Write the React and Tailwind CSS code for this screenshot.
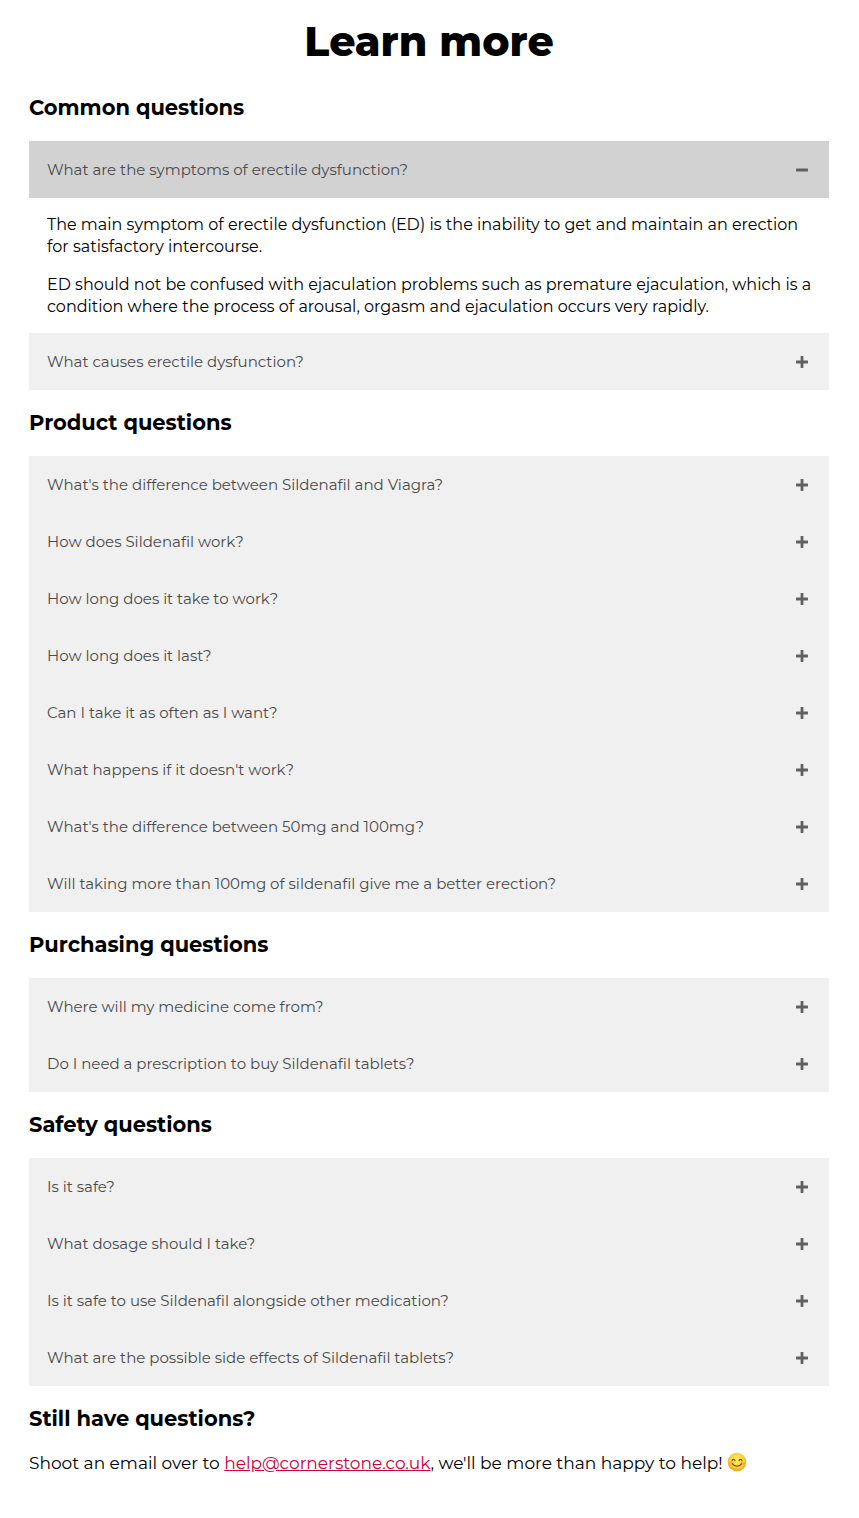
import { useState } from "react";

const sections = [
  {
    title: "Common questions",
    items: [
      {
        q: "What are the symptoms of erectile dysfunction?",
        a: [
          "The main symptom of erectile dysfunction (ED) is the inability to get and maintain an erection for satisfactory intercourse.",
          "ED should not be confused with ejaculation problems such as premature ejaculation, which is a condition where the process of arousal, orgasm and ejaculation occurs very rapidly.",
        ],
      },
      { q: "What causes erectile dysfunction?" },
    ],
  },
  {
    title: "Product questions",
    items: [
      { q: "What's the difference between Sildenafil and Viagra?" },
      { q: "How does Sildenafil work?" },
      { q: "How long does it take to work?" },
      { q: "How long does it last?" },
      { q: "Can I take it as often as I want?" },
      { q: "What happens if it doesn't work?" },
      { q: "What's the difference between 50mg and 100mg?" },
      { q: "Will taking more than 100mg of sildenafil give me a better erection?" },
    ],
  },
  {
    title: "Purchasing questions",
    items: [
      { q: "Where will my medicine come from?" },
      { q: "Do I need a prescription to buy Sildenafil tablets?" },
    ],
  },
  {
    title: "Safety questions",
    items: [
      { q: "Is it safe?" },
      { q: "What dosage should I take?" },
      { q: "Is it safe to use Sildenafil alongside other medication?" },
      { q: "What are the possible side effects of Sildenafil tablets?" },
    ],
  },
];

function ToggleIcon({ open }) {
  return (
    <svg viewBox="0 0 12 12" className="size-3 shrink-0" fill="#606060" aria-hidden="true">
      <rect x="0" y="4.6" width="12" height="2.8" rx="0.4" />
      {!open && <rect x="4.6" y="0" width="2.8" height="12" rx="0.4" />}
    </svg>
  );
}

function Smile() {
  return (
    <svg viewBox="0 0 20 20" className="ml-1 inline-block size-5 align-[-3px]" role="img" aria-label="Smiling face">
      <defs>
        <radialGradient id="face" cx="50%" cy="42%" r="58%">
          <stop offset="0" stopColor="#ffec66" />
          <stop offset="0.6" stopColor="#fed53c" />
          <stop offset="1" stopColor="#f39d1c" />
        </radialGradient>
      </defs>
      <circle cx="10" cy="10" r="9.3" fill="url(#face)" />
      <ellipse cx="4.4" cy="11.2" rx="2.3" ry="1.8" fill="#fb8c2c" opacity="0.45" />
      <ellipse cx="15.6" cy="11.2" rx="2.3" ry="1.8" fill="#fb8c2c" opacity="0.45" />
      <g fill="none" stroke="#6e3d10" strokeWidth="1.1" strokeLinecap="round">
        <path d="M5 8.6C5.5 6.7 7.5 6.7 8 8.6" />
        <path d="M12 8.6C12.5 6.7 14.5 6.7 15 8.6" />
        <path d="M5.4 11.8C7.4 15 12.6 15 14.6 11.8" />
      </g>
    </svg>
  );
}

function Question({ id, item, initiallyOpen }) {
  const [open, setOpen] = useState(initiallyOpen);
  return (
    <div>
      <h3>
        <button
          type="button"
          aria-expanded={open}
          aria-controls={id}
          onClick={() => setOpen(!open)}
          className={
            "flex min-h-[57px] w-full items-center justify-between gap-4 pr-[21px] pl-[18px] text-left text-[15px] leading-[23px] text-[#4a4a4a] " +
            (open ? "bg-[#d2d2d2]" : "bg-[#f0f0f0]")
          }
        >
          <span>{item.q}</span>
          <ToggleIcon open={open} />
        </button>
      </h3>
      <div id={id} hidden={!open}>
        {item.a && (
          <div className="space-y-4 pt-4 pr-4 pb-[15px] pl-[18px] text-base leading-[22px]">
            {item.a.map((text) => (
              <p key={text}>{text}</p>
            ))}
          </div>
        )}
      </div>
    </div>
  );
}

function SectionTitle({ children }) {
  return <h2 className="py-[18px] text-[21px] leading-[30px] font-bold">{children}</h2>;
}

export default function App() {
  return (
    <main className="min-h-screen bg-white pt-2 pr-[30px] pb-11 pl-[29px] font-['Montserrat','Inter',sans-serif] text-black">
      <h1 className="text-center text-[41px] leading-[67px] font-extrabold">Learn more</h1>
      {sections.map((section, s) => (
        <section key={section.title}>
          <SectionTitle>{section.title}</SectionTitle>
          {section.items.map((item, i) => (
            <Question key={item.q} id={`answer-${s}-${i}`} item={item} initiallyOpen={s === 0 && i === 0} />
          ))}
        </section>
      ))}
      <section>
        <SectionTitle>Still have questions?</SectionTitle>
        <p className="text-[17px] leading-[22px]">
          Shoot an email over to{" "}
          <a href="mailto:help@cornerstone.co.uk" className="text-[#c8003c] underline">
            help@cornerstone.co.uk
          </a>
          , we'll be more than happy to help!
          <Smile />
        </p>
      </section>
    </main>
  );
}
